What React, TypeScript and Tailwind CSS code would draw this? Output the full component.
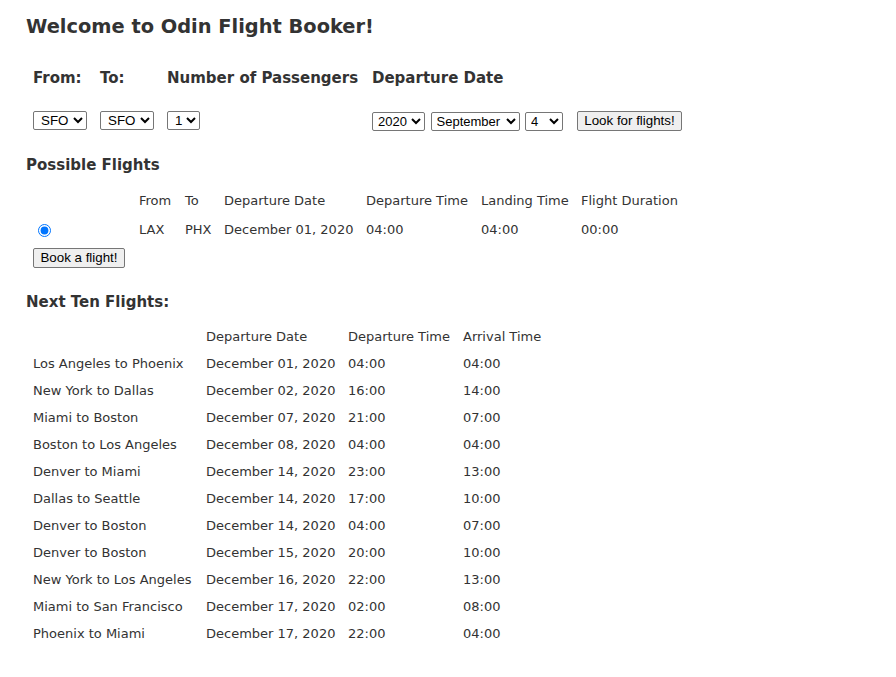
import React from "react";

const airports = ["SFO", "LAX", "NYC", "PHX", "MIA", "BOS", "DEN", "DAL", "SEA"];

const nextFlights = [
  ["Los Angeles to Phoenix", "December 01, 2020", "04:00", "04:00"],
  ["New York to Dallas", "December 02, 2020", "16:00", "14:00"],
  ["Miami to Boston", "December 07, 2020", "21:00", "07:00"],
  ["Boston to Los Angeles", "December 08, 2020", "04:00", "04:00"],
  ["Denver to Miami", "December 14, 2020", "23:00", "13:00"],
  ["Dallas to Seattle", "December 14, 2020", "17:00", "10:00"],
  ["Denver to Boston", "December 14, 2020", "04:00", "07:00"],
  ["Denver to Boston", "December 15, 2020", "20:00", "10:00"],
  ["New York to Los Angeles", "December 16, 2020", "22:00", "13:00"],
  ["Miami to San Francisco", "December 17, 2020", "02:00", "08:00"],
  ["Phoenix to Miami", "December 17, 2020", "22:00", "04:00"],
];

const selectCls =
  "h-[19px] rounded-[2px] border border-[#767676] bg-white pl-[3px] text-[13.33px] font-['Liberation_Sans',Arial,sans-serif] text-black";
const dateSelectCls =
  "h-[19px] rounded-[2px] border border-[#767676] bg-white pl-[1px] text-[13px] font-['Liberation_Sans',Arial,sans-serif] text-black";
const buttonCls =
  "h-[20px] rounded-[2px] border border-[#767676] bg-[#efefef] text-[13.33px] leading-none font-['Liberation_Sans',Arial,sans-serif] text-black";

export default function App() {
  return (
    <div className="min-h-[677px] bg-white px-[26px] pt-[14px] font-['DejaVu_Sans',Verdana,sans-serif] text-[13px] text-[#333]">
      <h1 className="text-[19.4px] font-bold leading-[26px]">Welcome to Odin Flight Booker!</h1>

      <table className="mt-[25px] border-collapse">
        <thead>
          <tr className="h-[27px] text-[15px] font-bold">
            <th className="w-[74px] pl-[7px] text-left">From:</th>
            <th className="w-[67px] text-left">To:</th>
            <th className="w-[205px] text-left">Number of Passengers</th>
            <th className="text-left">Departure Date</th>
            <th />
          </tr>
        </thead>
        <tbody>
          <tr className="h-[58px]">
            <td className="pl-[7px]">
              <select className={selectCls} defaultValue="SFO">
                {airports.map((a) => (
                  <option key={a}>{a}</option>
                ))}
              </select>
            </td>
            <td>
              <select className={selectCls} defaultValue="SFO">
                {airports.map((a) => (
                  <option key={a}>{a}</option>
                ))}
              </select>
            </td>
            <td>
              <select className={selectCls} defaultValue="1">
                {[1, 2, 3, 4].map((n) => (
                  <option key={n}>{n}</option>
                ))}
              </select>
            </td>
            <td className="pr-[14px]">
              <div className="flex gap-[5.5px]">
                <select className={`${dateSelectCls} w-[53px]`} defaultValue="2020">
                  <option>2020</option>
                  <option>2021</option>
                </select>
                <select className={`${dateSelectCls} w-[89px]`} defaultValue="September">
                  <option>September</option>
                </select>
                <select className={`${dateSelectCls} w-[38px]`} defaultValue="4">
                  <option>4</option>
                  <option>14</option>
                </select>
              </div>
            </td>
            <td>
              <button type="button" className={`${buttonCls} w-[105px]`}>
                Look for flights!
              </button>
            </td>
          </tr>
        </tbody>
      </table>

      <h2 className="mt-[5px] text-[15px] font-bold leading-[20px]">Possible Flights</h2>

      <table className="mt-[16px] border-collapse">
        <thead>
          <tr className="h-[20px] text-left">
            <th className="w-[113px] font-normal" />
            <th className="w-[46px] text-left font-normal">From</th>
            <th className="w-[39px] text-left font-normal">To</th>
            <th className="w-[142px] text-left font-normal">Departure Date</th>
            <th className="w-[115px] text-left font-normal">Departure Time</th>
            <th className="w-[100px] text-left font-normal">Landing Time</th>
            <th className="text-left font-normal">Flight Duration</th>
          </tr>
        </thead>
        <tbody>
          <tr className="h-[37px]">
            <td className="pl-[12px]">
              <input
                type="radio"
                name="flight"
                defaultChecked
                className="m-0 h-[13px] w-[13px] align-middle accent-[#0075ff]"
              />
            </td>
            <td>LAX</td>
            <td>PHX</td>
            <td>December 01, 2020</td>
            <td>04:00</td>
            <td>04:00</td>
            <td>00:00</td>
          </tr>
        </tbody>
      </table>
      <button type="button" className={`${buttonCls} ml-[7px] w-[92px]`}>
        Book a flight!
      </button>

      <h2 className="mt-[24px] text-[15px] font-bold leading-[20px]">Next Ten Flights:</h2>

      <table className="mt-[11px] border-collapse">
        <thead>
          <tr className="h-[27px]">
            <th className="w-[180px] font-normal" />
            <th className="w-[142px] text-left font-normal">Departure Date</th>
            <th className="w-[115px] text-left font-normal">Departure Time</th>
            <th className="text-left font-normal">Arrival Time</th>
          </tr>
        </thead>
        <tbody>
          {nextFlights.map((f, i) => (
            <tr key={i} className="h-[27px]">
              <td className="pl-[7px]">{f[0]}</td>
              <td>{f[1]}</td>
              <td>{f[2]}</td>
              <td>{f[3]}</td>
            </tr>
          ))}
        </tbody>
      </table>
    </div>
  );
}
